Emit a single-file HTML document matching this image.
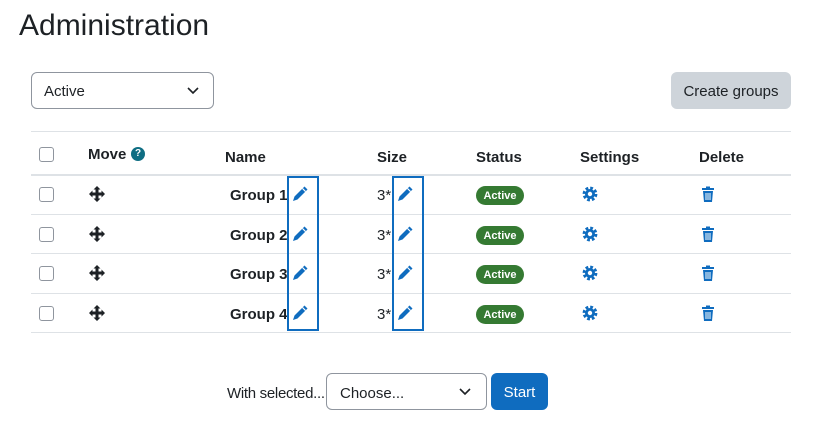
<!DOCTYPE html>
<html><head><style>
body{margin:0;width:819px;height:428px;background:#fff;font-family:"Liberation Sans",sans-serif;color:#1d2125;position:relative;overflow:hidden}
.a{position:absolute}
.h{font-weight:bold;font-size:15px}
.line{position:absolute;left:31px;width:760px;height:1px;background:#dee2e6}
.cb{position:absolute;left:39px;width:13px;height:13px;border:1px solid #8f959e;border-radius:3px;background:#fff}
.g{font-weight:bold;font-size:15px;position:absolute;left:230px}
.badge{position:absolute;left:476px;width:48px;height:19px;border-radius:10px;background:#357a32;color:#fff;font-size:11px;font-weight:bold;text-align:center;line-height:20px}
.sz{position:absolute;left:377px;font-size:15px}
</style></head><body>
<div class="a" style="left:19px;top:9px;font-size:30px;">Administration</div>
<div class="a" style="left:31px;top:72px;width:181px;height:35px;border:1px solid #8f959e;border-radius:6px;"></div>
<div class="a" style="left:44px;top:83px;font-size:15px">Active</div>
<svg class="a" style="left:187px;top:87px" width="12" height="8"><path d="M1 1l5 5 5-5" fill="none" stroke="#1d2125" stroke-width="1.6"/></svg>
<div class="a" style="left:671px;top:72px;width:120px;height:37px;background:#ced4da;border-radius:6px;font-size:15px;text-align:center;line-height:40px">Create groups</div>

<div class="line" style="top:131px"></div>
<div class="line" style="top:174px;height:2px"></div>
<div class="line" style="top:214px"></div>
<div class="line" style="top:253px"></div>
<div class="line" style="top:293px"></div>
<div class="line" style="top:332px"></div>

<div class="cb" style="top:147px"></div>
<div class="a h" style="left:88px;top:146px">Move</div>
<div class="a" style="left:131px;top:147px;width:14px;height:14px;border-radius:50%;background:#0f6e83;color:#fff;font-size:10px;font-weight:bold;text-align:center;line-height:14px">?</div>
<div class="a h" style="left:225px;top:149px">Name</div>
<div class="a h" style="left:377px;top:149px">Size</div>
<div class="a h" style="left:476px;top:149px">Status</div>
<div class="a h" style="left:580px;top:149px">Settings</div>
<div class="a h" style="left:699px;top:149px">Delete</div>

<div class="cb" style="top:187px"></div><div class="cb" style="top:227px"></div><div class="cb" style="top:266px"></div><div class="cb" style="top:306px"></div>
<svg width="0" height="0" style="position:absolute"><defs>
<g id="mv"><path d="M8 0l3.5 3.5H9.5v3h3V4.5L16 8l-3.5 3.5V9.5h-3v3h2L8 16l-3.5-3.5h2v-3h-3v2L0 8l3.5-3.5v2h3v-3h-2z" fill="#1d2125"/></g>
<g id="pen"><path d="M12.5 0.5l3 3-10 10-4.5 1.5 1.5-4.5z" fill="#0f6cbf"/><path d="M10.5 2.5l3 3" stroke="#fff" stroke-width="1.2"/></g>
<g id="gear"><circle cx="8" cy="8" r="5.6" fill="none" stroke="#0f6cbf" stroke-width="3.6" stroke-dasharray="2.6 1.8"/><circle cx="8" cy="8" r="5" fill="#0f6cbf"/><circle cx="8" cy="8" r="2.2" fill="#fff"/></g>
<g id="trash"><rect x="2" y="2" width="12" height="2" fill="#0f6cbf"/><rect x="6" y="0.5" width="4" height="2" fill="#0f6cbf"/><path d="M3 5h10l-1 11H4z" fill="#0f6cbf"/><path d="M6 7v7M8 7v7M10 7v7" stroke="#fff" stroke-width="1"/></g>
</defs></svg>
<svg class="a" style="left:89px;top:186px" width="16" height="16"><use href="#mv"/></svg>
<svg class="a" style="left:89px;top:226px" width="16" height="16"><use href="#mv"/></svg>
<svg class="a" style="left:89px;top:265px" width="16" height="16"><use href="#mv"/></svg>
<svg class="a" style="left:89px;top:305px" width="16" height="16"><use href="#mv"/></svg>

<div class="g" style="top:187px">Group 1</div><div class="g" style="top:227px">Group 2</div><div class="g" style="top:266px">Group 3</div><div class="g" style="top:306px">Group 4</div>
<div class="sz" style="top:187px">3*</div><div class="sz" style="top:227px">3*</div><div class="sz" style="top:266px">3*</div><div class="sz" style="top:306px">3*</div>

<div class="a" style="left:287px;top:176px;width:28px;height:151px;border:2px solid #0f6cbf"></div>
<div class="a" style="left:392px;top:176px;width:28px;height:151px;border:2px solid #0f6cbf"></div>
<svg class="a" style="left:292px;top:186px" width="16" height="16"><use href="#pen"/></svg>
<svg class="a" style="left:292px;top:226px" width="16" height="16"><use href="#pen"/></svg>
<svg class="a" style="left:292px;top:265px" width="16" height="16"><use href="#pen"/></svg>
<svg class="a" style="left:292px;top:305px" width="16" height="16"><use href="#pen"/></svg>
<svg class="a" style="left:397px;top:186px" width="16" height="16"><use href="#pen"/></svg>
<svg class="a" style="left:397px;top:226px" width="16" height="16"><use href="#pen"/></svg>
<svg class="a" style="left:397px;top:265px" width="16" height="16"><use href="#pen"/></svg>
<svg class="a" style="left:397px;top:305px" width="16" height="16"><use href="#pen"/></svg>

<div class="badge" style="top:186px">Active</div><div class="badge" style="top:226px">Active</div><div class="badge" style="top:265px">Active</div><div class="badge" style="top:305px">Active</div>
<svg class="a" style="left:582px;top:186px" width="16" height="16"><use href="#gear"/></svg>
<svg class="a" style="left:582px;top:226px" width="16" height="16"><use href="#gear"/></svg>
<svg class="a" style="left:582px;top:265px" width="16" height="16"><use href="#gear"/></svg>
<svg class="a" style="left:582px;top:305px" width="16" height="16"><use href="#gear"/></svg>
<svg class="a" style="left:700px;top:186px" width="16" height="16"><use href="#trash"/></svg>
<svg class="a" style="left:700px;top:226px" width="16" height="16"><use href="#trash"/></svg>
<svg class="a" style="left:700px;top:265px" width="16" height="16"><use href="#trash"/></svg>
<svg class="a" style="left:700px;top:305px" width="16" height="16"><use href="#trash"/></svg>

<div class="a" style="left:227px;top:385px;font-size:15px;letter-spacing:-0.3px">With selected...</div>
<div class="a" style="left:326px;top:373px;width:159px;height:35px;border:1px solid #8f959e;border-radius:6px"></div>
<div class="a" style="left:340px;top:385px;font-size:15px">Choose...</div>
<svg class="a" style="left:459px;top:388px" width="12" height="8"><path d="M1 1l5 5 5-5" fill="none" stroke="#1d2125" stroke-width="1.6"/></svg>
<div class="a" style="left:491px;top:373px;width:57px;height:37px;background:#0f6cbf;border-radius:6px;color:#fff;font-size:15px;text-align:center;line-height:40px">Start</div>
</body></html>
